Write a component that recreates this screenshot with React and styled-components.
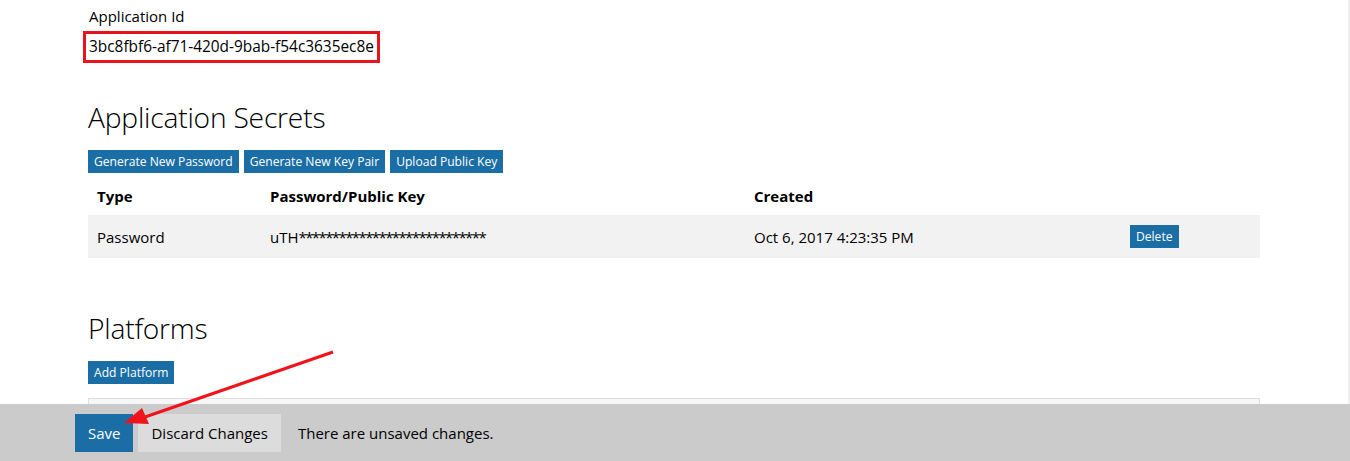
import React from "react";
import styled, { createGlobalStyle } from "styled-components";

const GlobalStyle = createGlobalStyle`
  html, body {
    margin: 0;
    padding: 0;
    background: #fff;
    font-family: "Open Sans", "Noto Sans", sans-serif;
    color: #000;
    overflow: hidden;
  }
  body {
    border-right: 2px solid #f0f0f0;
    box-sizing: border-box;
    min-height: 461px;
  }
`;

const Page = styled.div`
  padding: 5px 0 0 88px;
  width: 1172px;
`;

const Label = styled.div`
  font-size: 15px;
  line-height: 22px;
  padding-left: 1px;
`;

const IdBox = styled.div`
  width: fit-content;
  margin: 4px 0 0 -5px;
  border: 3px solid #e8141c;
  padding: 0 3px;
  height: 26px;
  line-height: 26px;
  font-size: 15.4px;
`;

const Heading = styled.h2`
  margin: ${(p) => p.$top}px 0 0 0;
  font-size: 28.2px;
  font-weight: 300;
  line-height: 36px;
  letter-spacing: -0.2px;
`;

const ButtonRow = styled.div`
  display: flex;
  gap: 5px;
  margin-top: 15px;
`;

const Button = styled.button`
  border: none;
  background: #1b6ea5;
  color: #fff;
  font-family: inherit;
  font-size: 12.1px;
  height: 23px;
  padding: 0 6px;
  cursor: pointer;
`;

const Table = styled.div`
  margin-top: 4px;
`;

const Row = styled.div`
  display: grid;
  grid-template-columns: 173px 484px 376px 139px;
  align-items: center;
  height: ${(p) => p.$h}px;
  background: ${(p) => (p.$shade ? "#f2f2f2" : "transparent")};
  font-size: 15px;
  font-weight: ${(p) => (p.$head ? 700 : 400)};
`;

const Cell = styled.div`
  padding-left: 9px;
`;

const Masked = styled.span`
  letter-spacing: -1.6px;
`;

const Panel = styled.div`
  margin-top: 14px;
  height: 60px;
  border: 1px solid #dedede;
  background: #f7f7f7;
`;

const Footer = styled.div`
  position: fixed;
  left: 0;
  right: 0;
  bottom: 0;
  height: 57px;
  background: #cbcbcb;
  display: flex;
  align-items: center;
  padding-left: 75px;
  gap: 5px;
`;

const FooterButton = styled.button`
  border: none;
  height: 38px;
  padding: 0 13px;
  font-family: inherit;
  font-size: 15px;
  background: ${(p) => (p.$primary ? "#1b6ea5" : "#dcdcdc")};
  color: ${(p) => (p.$primary ? "#fff" : "#000")};
  cursor: pointer;
`;

const Notice = styled.span`
  margin-left: 12px;
  font-size: 15px;
`;

const Arrow = styled.svg`
  position: fixed;
  left: 0;
  top: 0;
  pointer-events: none;
`;

export default function App() {
  return (
    <>
      <GlobalStyle />
      <Page>
        <Label>Application Id</Label>
        <IdBox>3bc8fbf6-af71-420d-9bab-f54c3635ec8e</IdBox>

        <Heading $top={36}>Application Secrets</Heading>
        <ButtonRow>
          <Button>Generate New Password</Button>
          <Button>Generate New Key Pair</Button>
          <Button>Upload Public Key</Button>
        </ButtonRow>

        <Table>
          <Row $h={38} $head>
            <Cell>Type</Cell>
            <Cell>Password/Public Key</Cell>
            <Cell>Created</Cell>
            <Cell />
          </Row>
          <Row $h={43} $shade>
            <Cell>Password</Cell>
            <Cell>
              uTH<Masked>****************************</Masked>
            </Cell>
            <Cell>Oct 6, 2017 4:23:35 PM</Cell>
            <Cell>
              <Button>Delete</Button>
            </Cell>
          </Row>
        </Table>

        <Heading $top={52}>Platforms</Heading>
        <ButtonRow>
          <Button>Add Platform</Button>
        </ButtonRow>
        <Panel />
      </Page>

      <Footer>
        <FooterButton $primary>Save</FooterButton>
        <FooterButton>Discard Changes</FooterButton>
        <Notice>There are unsaved changes.</Notice>
      </Footer>

      <Arrow width="1350" height="461">
        <line x1="333" y1="352" x2="145" y2="417" stroke="#f0141a" strokeWidth="3" />
        <polygon points="124,423 142,408 149,424" fill="#f0141a" />
      </Arrow>
    </>
  );
}
